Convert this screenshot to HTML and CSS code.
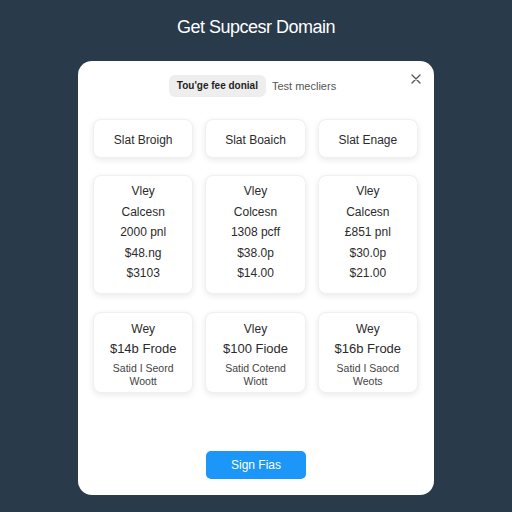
FILE: index.html
```html
<!doctype html>
<html lang="en">
  <head>
    <meta charset="UTF-8">
    <meta name="viewport" content="width=device-width, initial-scale=1.0">
    <title>Get Supcesr Domain</title>
    <link rel="stylesheet" href="styles.css">
  </head>
  <body>
    <h1 class="title">Get Supcesr Domain</h1>

    <div class="modal">
      <button class="close" aria-label="Close">
        <svg width="10" height="10" viewBox="0 0 10 10">
          <path d="M1 1 L9 9 M9 1 L1 9" stroke="#555" stroke-width="1.3" stroke-linecap="round"/>
        </svg>
      </button>

      <!-- tab switcher -->
      <div class="tabs">
        <span class="tab active">Tou'ge fee donial</span>
        <span class="tab">Test mecliers</span>
      </div>

      <div class="grid">
        <div class="card small">Slat Broigh</div>
        <div class="card small">Slat Boaich</div>
        <div class="card small">Slat Enage</div>
      </div>

      <div class="grid plans">
        <div class="card plan">
          <p>Vley</p>
          <p>Calcesn</p>
          <p>2000 pnl</p>
          <p>$48.ng</p>
          <p>$3103</p>
        </div>
        <div class="card plan">
          <p>Vley</p>
          <p>Colcesn</p>
          <p>1308 pcff</p>
          <p>$38.0p</p>
          <p>$14.00</p>
        </div>
        <div class="card plan">
          <p>Vley</p>
          <p>Calcesn</p>
          <p>£851 pnl</p>
          <p>$30.0p</p>
          <p>$21.00</p>
        </div>
      </div>

      <div class="grid offers">
        <div class="card offer">
          <p>Wey</p>
          <p class="price">$14b Frode</p>
          <p class="desc">Satid I Seord<br>Woott</p>
        </div>
        <div class="card offer">
          <p>Vley</p>
          <p class="price">$100 Fiode</p>
          <p class="desc">Satid Cotend<br>Wiott</p>
        </div>
        <div class="card offer">
          <p>Wey</p>
          <p class="price">$16b Frode</p>
          <p class="desc">Satid I Saocd<br>Weots</p>
        </div>
      </div>

      <div class="actions">
        <button class="primary">Sign Fias</button>
      </div>
    </div>
  </body>
</html>
```

FILE: styles.css
```css
body {
  margin: 0;
  background: #293a4b;
  font-family: "Liberation Sans", Arial, sans-serif;
  color: #2b2b2b;
  display: flex;
  flex-direction: column;
  align-items: center;
}
.title {
  margin: 17px 0 0;
  font-size: 18px;
  font-weight: normal;
  line-height: 20px;
  letter-spacing: -0.5px;
  color: #fff;
}
.modal {
  position: relative;
  width: 356px;
  height: 434px;
  margin-top: 24px;
  box-sizing: border-box;
  padding: 14px 16px 16px 15px;
  background: #fff;
  border-radius: 14px;
  display: flex;
  flex-direction: column;
}
.close {
  position: absolute;
  top: 13px;
  right: 13px;
  padding: 0;
  border: none;
  background: none;
  line-height: 0;
}
.tabs {
  display: flex;
  justify-content: center;
  align-items: center;
  gap: 6px;
  font-size: 11px;
  margin-right: 6px;
}
.tab {
  line-height: 12px;
  color: #555;
}
.tab.active {
  padding: 5px 8px;
  background: #eeeeee;
  border-radius: 6px;
  font-size: 10px;
  font-weight: bold;
  color: #1e1e1e;
}
.grid {
  display: grid;
  grid-template-columns: repeat(3, 1fr);
  gap: 12px;
  margin-top: 22px;
}
.card {
  background: #fff;
  border: 1px solid #f0f0f0;
  border-radius: 8px;
  box-shadow: 0 2px 6px rgba(0, 0, 0, 0.09);
  text-align: center;
  font-size: 12px;
}
.card p {
  margin: 0;
}
.card.small {
  height: 39px;
  box-sizing: border-box;
  padding-top: 2px;
  line-height: 36px;
}
.plans {
  margin-top: 17px;
}
.card.plan {
  height: 119px;
  box-sizing: border-box;
  padding-top: 5px;
  line-height: 20.5px;
}
.offers {
  margin-top: 18px;
}
.card.offer {
  height: 81px;
  box-sizing: border-box;
  padding-top: 7px;
  line-height: 19px;
}
.card.offer .price {
  font-size: 13px;
}
.card.offer .desc {
  margin-top: 4px;
  font-size: 10.5px;
  line-height: 13px;
  color: #444;
}
.actions {
  margin-top: auto;
  display: flex;
  justify-content: center;
}
.primary {
  width: 100px;
  height: 28px;
  margin-left: 1px;
  background: #1c96f8;
  color: #fff;
  border: none;
  border-radius: 5px;
  font-family: "Liberation Sans", Arial, sans-serif;
  font-size: 12px;
}
```
